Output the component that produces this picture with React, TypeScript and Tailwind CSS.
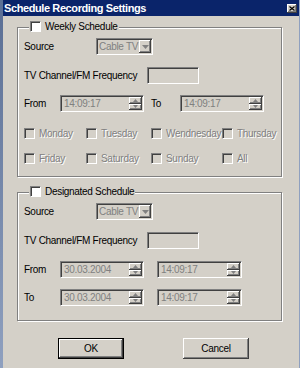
import React from 'react';

const font = "font-['Liberation_Sans',Arial,sans-serif] text-[10px] tracking-[-0.3px] leading-none";
const sunken =
  'border border-t-[#808080] border-l-[#808080] border-b-white border-r-white shadow-[inset_1px_1px_0_#404040]';
const raised = 'bg-[#d4d0c8] shadow-[inset_-1px_-1px_0_#404040,inset_1px_1px_0_#fff,inset_-2px_-2px_0_#808080]';
const dim = 'text-[#808080] [text-shadow:1px_1px_0_#fff]';

function Check({ label, disabled }: { label: string; disabled?: boolean }) {
  return (
    <div className="flex items-center gap-[4px]">
      <span className={`w-[11px] h-[11px] ${sunken} ${disabled ? 'bg-[#d4d0c8]' : 'bg-white'}`} />
      <span className={disabled ? dim : 'text-black'}>{label}</span>
    </div>
  );
}

function Arrow({ up }: { up?: boolean }) {
  return (
    <svg width="5" height="3" viewBox="0 0 5 3">
      <path d={up ? 'M2.5 0 L5 3 L0 3 Z' : 'M0 0 L5 0 L2.5 3 Z'} fill="#808080" />
    </svg>
  );
}

function Spin({ value, w }: { value: string; w: string }) {
  return (
    <div className={`flex h-[17px] ${w} ${sunken} bg-[#d4d0c8]`}>
      <span className="flex-1 pl-[3px] flex items-center text-[#808080]">{value}</span>
      <div className="flex flex-col w-[14px] py-[1px] pr-[1px]">
        <div className={`flex-1 flex items-center justify-center ${raised}`}>
          <Arrow up />
        </div>
        <div className={`flex-1 flex items-center justify-center ${raised}`}>
          <Arrow />
        </div>
      </div>
    </div>
  );
}

function Combo() {
  return (
    <div className={`flex h-[17px] w-[57px] ${sunken} bg-[#d4d0c8]`}>
      <span className="flex-1 pl-[2px] flex items-center text-[#808080]">Cable TV</span>
      <div className={`w-[12px] my-[1px] mr-[1px] flex items-center justify-center ${raised}`}>
        <svg width="7" height="4" viewBox="0 0 7 4">
          <path d="M0 0 L7 0 L3.5 4 Z" fill="#808080" />
        </svg>
      </div>
    </div>
  );
}

function Group({ title, className, children }: { title: string; className: string; children: React.ReactNode }) {
  return (
    <div
      className={`relative ml-[14px] w-[265px] border border-[#808080] shadow-[inset_1px_1px_0_#fff,1px_1px_0_#fff] pl-[6px] ${className}`}
    >
      <div className="absolute left-[11px] top-[-7px] px-[1px] bg-[#d4d0c8]">
        <Check label={title} />
      </div>
      {children}
    </div>
  );
}

function SourceRows() {
  return (
    <>
      <div className="flex items-center h-[17px]">
        <span className="w-[72px]">Source</span>
        <Combo />
      </div>
      <div className="flex items-center h-[17px]">
        <span className="w-[123px]">TV Channel/FM Frequency</span>
        <div className={`h-[17px] w-[52px] ${sunken} bg-[#d4d0c8]`} />
      </div>
    </>
  );
}

export default function App() {
  return (
    <div className={`w-[300px] h-[368px] flex overflow-hidden bg-[#6f82a6] ${font}`}>
      <div className="w-[3px] bg-[linear-gradient(#5a6e94,#8fa0bf)]" />
      <div className="w-[296px] flex flex-col bg-[#d4d0c8]">
        <div className="h-[16px] flex items-center justify-between bg-[#0a246a] pl-[1px] pr-[2px]">
          <span className="text-white font-bold text-[11px] tracking-[-0.4px]">Schedule Recording Settings</span>
          <div className={`w-[10px] h-[9px] flex items-center justify-center ${raised}`}>
            <svg width="6" height="5" viewBox="0 0 6 5">
              <path d="M0.5 0.5 L5.5 4.5 M5.5 0.5 L0.5 4.5" stroke="#000" strokeWidth="1.2" />
            </svg>
          </div>
        </div>

        <Group title="Weekly Schedule" className="mt-[11px] h-[150px] pt-[10px] flex flex-col gap-[12px]">
          <SourceRows />
          <div className="flex items-center h-[17px] -mt-[1px]">
            <span className="w-[36px]">From</span>
            <Spin value="14:09:17" w="w-[84px]" />
            <span className="w-[36px] pl-[7px]">To</span>
            <Spin value="14:09:17" w="w-[84px]" />
          </div>
          <div className="flex flex-col gap-[8px] mt-[1px]">
            {[
              ['Monday', 'Tuesday', 'Wendnesday', 'Thursday'],
              ['Friday', 'Saturday', 'Sunday', 'All'],
            ].map((row) => (
              <div key={row[0]} className="flex items-center h-[17px]">
                {row.map((d, i) => (
                  <div key={d} className={i === 0 ? 'w-[62px]' : i === 1 ? 'w-[65px]' : i === 2 ? 'w-[71px]' : ''}>
                    <Check label={d} disabled />
                  </div>
                ))}
              </div>
            ))}
          </div>
        </Group>

        <Group title="Designated Schedule" className="mt-[15px] h-[129px] pt-[10px] flex flex-col gap-[12px]">
          <SourceRows />
          <div className="flex items-center h-[17px]">
            <span className="w-[36px]">From</span>
            <Spin value="30.03.2004" w="w-[84px]" />
            <span className="w-[13px]" />
            <Spin value="14:09:17" w="w-[85px]" />
          </div>
          <div className="flex items-center h-[17px] -mt-[1px]">
            <span className="w-[36px]">To</span>
            <Spin value="30.03.2004" w="w-[84px]" />
            <span className="w-[13px]" />
            <Spin value="14:09:17" w="w-[85px]" />
          </div>
        </Group>

        <div className="flex mt-[17px] pl-[55px] gap-[59px]">
          <div className="w-[66px] h-[21px] border border-black">
            <div className={`w-full h-full flex items-center justify-center ${raised}`}>OK</div>
          </div>
          <div className={`w-[66px] h-[21px] flex items-center justify-center ${raised}`}>Cancel</div>
        </div>
      </div>
      <div className="w-[1px] bg-[#8fa0bf]" />
    </div>
  );
}
